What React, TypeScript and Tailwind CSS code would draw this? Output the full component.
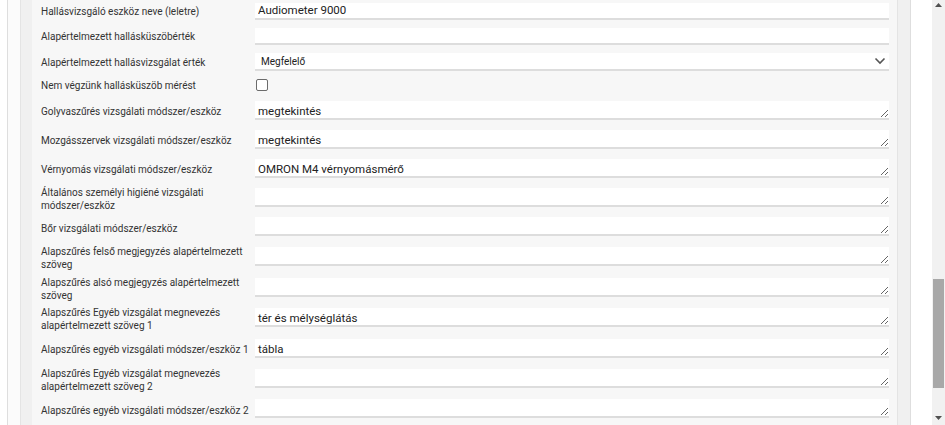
import { ChangeEvent } from "react";

type Row = {
  label: string;
  kind: "input" | "select" | "checkbox" | "textarea";
  value?: string;
  h: string;
};

const rows: Row[] = [
  { label: "Hallásvizsgáló eszköz neve (leletre)", kind: "input", value: "Audiometer 9000", h: "h-[23px]" },
  { label: "Alapértelmezett hallásküszöbérték", kind: "input", value: "", h: "h-[26px]" },
  { label: "Alapértelmezett hallásvizsgálat érték", kind: "select", value: "Megfelelő", h: "h-[26px]" },
  { label: "Nem végzünk hallásküszöb mérést", kind: "checkbox", h: "h-[20px]" },
  { label: "Golyvaszűrés vizsgálati módszer/eszköz", kind: "textarea", value: "megtekintés", h: "h-[29px]" },
  { label: "Mozgásszervek vizsgálati módszer/eszköz", kind: "textarea", value: "megtekintés", h: "h-[29px]" },
  { label: "Vérnyomás vizsgálati módszer/eszköz", kind: "textarea", value: "OMRON M4 vérnyomásmérő", h: "h-[29px]" },
  { label: "Általános személyi higiéné vizsgálati módszer/eszköz", kind: "textarea", value: "", h: "h-[29px]" },
  { label: "Bőr vizsgálati módszer/eszköz", kind: "textarea", value: "", h: "h-[30px]" },
  { label: "Alapszűrés felső megjegyzés alapértelmezett szöveg", kind: "textarea", value: "", h: "h-[30px]" },
  { label: "Alapszűrés alsó megjegyzés alapértelmezett szöveg", kind: "textarea", value: "", h: "h-[31px]" },
  { label: "Alapszűrés Egyéb vizsgálat megnevezés alapértelmezett szöveg 1", kind: "textarea", value: "tér és mélységlátás", h: "h-[30px]" },
  { label: "Alapszűrés egyéb vizsgálati módszer/eszköz 1", kind: "textarea", value: "tábla", h: "h-[31px]" },
  { label: "Alapszűrés Egyéb vizsgálat megnevezés alapértelmezett szöveg 2", kind: "textarea", value: "", h: "h-[30px]" },
  { label: "Alapszűrés egyéb vizsgálati módszer/eszköz 2", kind: "textarea", value: "", h: "h-[30px]" },
];

const noop = (_e: ChangeEvent) => {};

function Field({ row }: { row: Row }) {
  if (row.kind === "input") {
    return (
      <input
        value={row.value}
        onChange={noop}
        className="block h-[17px] w-full border-b-2 border-[#dddddd] bg-white px-[3px] text-[11.5px] text-[#222] outline-none"
      />
    );
  }
  if (row.kind === "select") {
    return (
      <div className="flex h-[18px] w-full items-center justify-between border-b-2 border-[#dddddd] bg-white pl-[6px] pr-[3px]">
        <span className="text-[10px] text-[#222]">{row.value}</span>
        <svg width="12" height="8" viewBox="0 0 12 8" fill="none">
          <path d="M1.5 1.5 L6 6 L10.5 1.5" stroke="#555" strokeWidth="1.6" />
        </svg>
      </div>
    );
  }
  if (row.kind === "checkbox") {
    return <span className="ml-px block h-[12px] w-[12px] rounded-[2px] border border-[#6b6b6b] bg-white" />;
  }
  return (
    <textarea
      value={row.value}
      onChange={noop}
      rows={1}
      className="mt-px block h-[19px] w-full resize-y overflow-hidden border-b-2 border-[#dddddd] bg-white px-[3px] pt-[4px] text-[11.5px] leading-[13px] text-[#222] outline-none"
    />
  );
}

export default function App() {
  return (
    <div className="flex h-[425px] w-[945px] overflow-hidden bg-white font-['Roboto',sans-serif]">
      {/* left page edge */}
      <div className="w-[7px] bg-white" />
      <div className="w-px bg-[#dedede]" />
      <div className="w-[12px] bg-[#fbfbfb]" />
      <div className="w-[12px] border-l border-[#e4e4e4] bg-[#f0f0f0]" />

      {/* form panel */}
      <div className="flex-1 bg-[#f7f7f7] pl-[9px] pr-[8px]">
        {rows.map((row) => (
          <div key={row.label} className={`flex items-center ${row.h}`}>
            <div
              className={`w-[214px] shrink-0 pr-[2px] text-[10px] leading-[13px] text-[#333] ${
                row.kind === "textarea" ? "pt-[4px]" : ""
              }`}
            >
              {row.label}
            </div>
            <div className="flex-1">
              <Field row={row} />
            </div>
          </div>
        ))}
      </div>

      {/* right page edge */}
      <div className="w-[13px] border-l border-[#e4e4e4] bg-[#f0f0f0]" />
      <div className="w-px bg-[#dedede]" />
      <div className="w-[21px] bg-white" />

      {/* scrollbar */}
      <div className="flex w-[13px] flex-col items-center bg-[#f1f1f1]">
        <svg width="7" height="4" viewBox="0 0 7 4" className="mt-[3px]">
          <path d="M0 4 L3.5 0 L7 4 Z" fill="#505050" />
        </svg>
        <div className="mt-[272px] h-[109px] w-[11px] bg-[#a8a8a8]" />
        <svg width="7" height="4" viewBox="0 0 7 4" className="mt-[28px]">
          <path d="M0 0 L3.5 4 L7 0 Z" fill="#505050" />
        </svg>
      </div>
    </div>
  );
}
